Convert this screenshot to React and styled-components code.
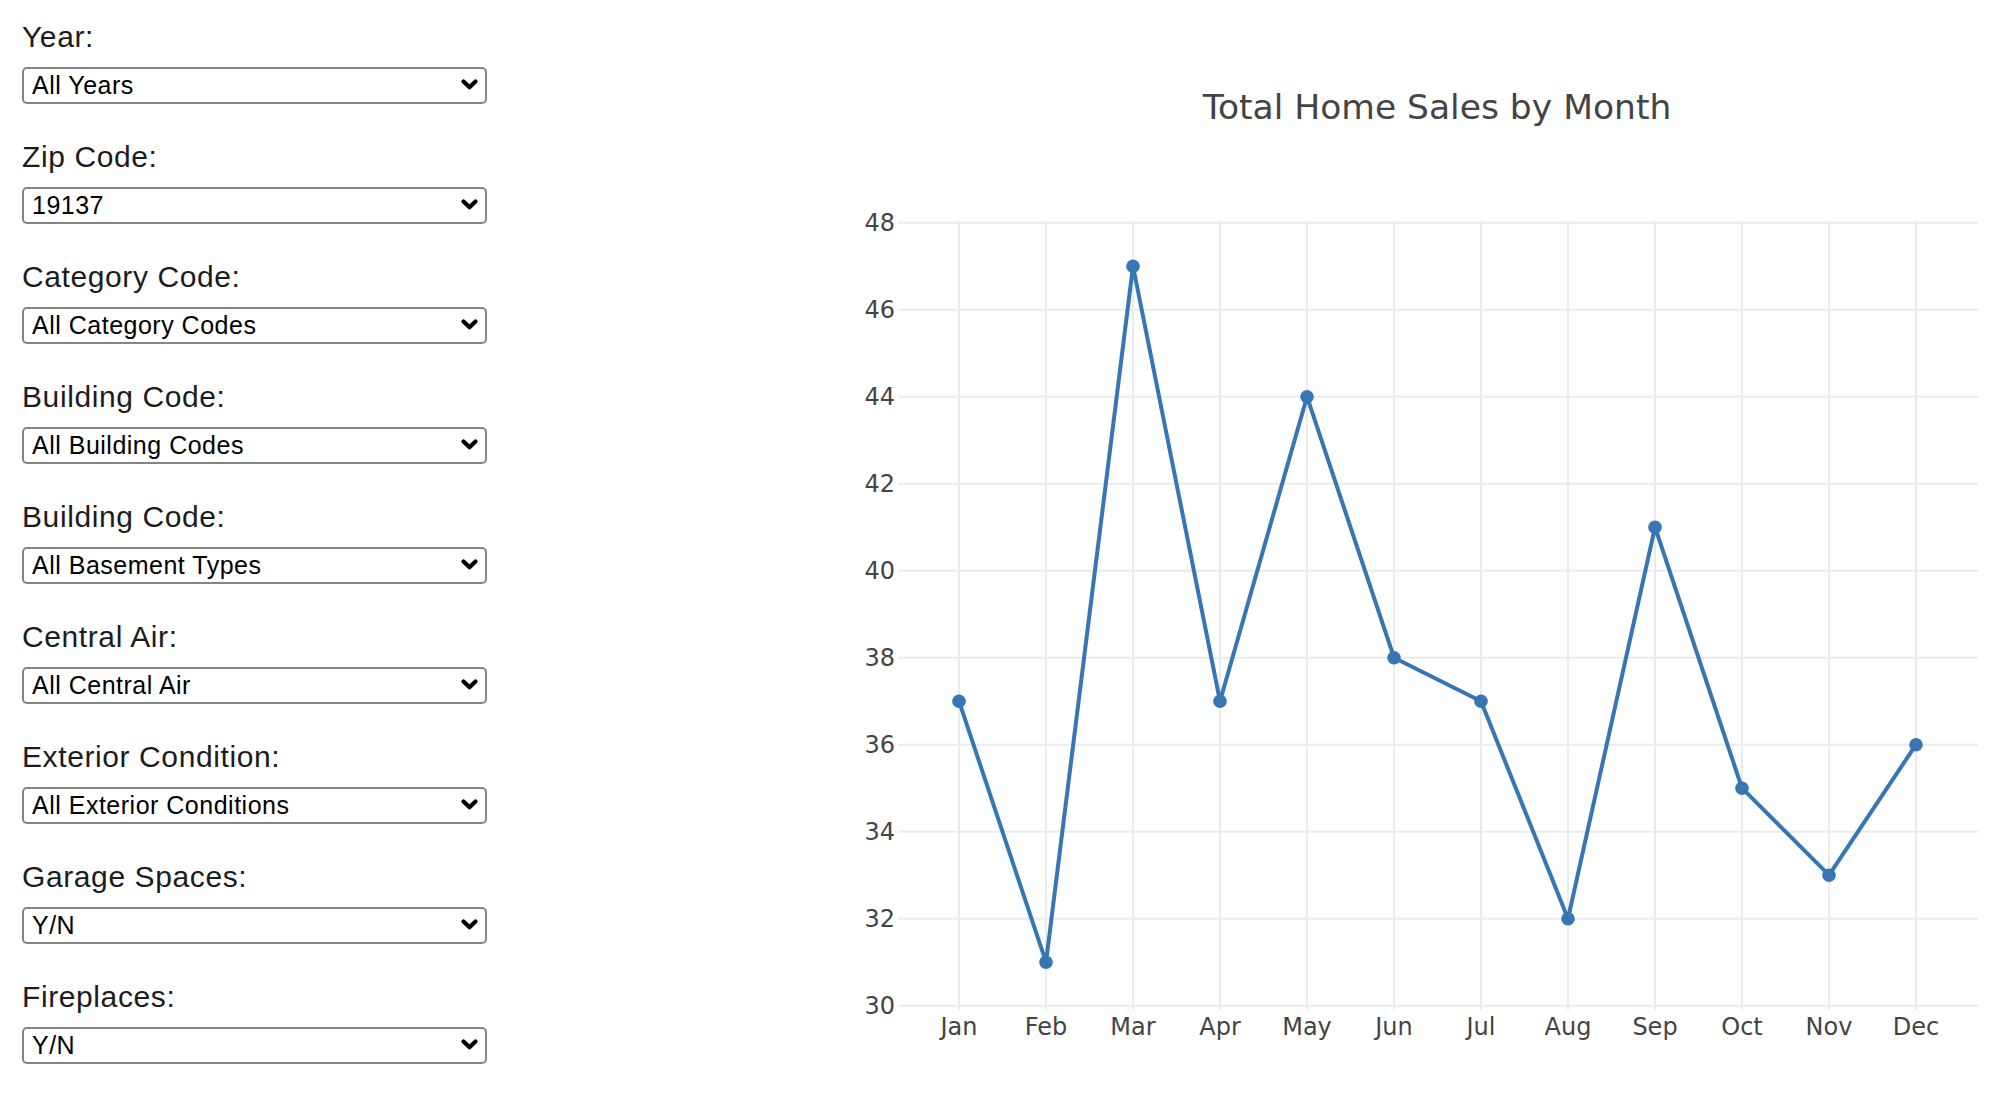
import React from 'react';
import styled, { createGlobalStyle } from 'styled-components';

const GlobalStyle = createGlobalStyle`
  html, body {
    margin: 0;
    padding: 0;
    background: #fff;
  }
  body {
    font-family: "Liberation Sans", Arial, sans-serif;
  }
`;

const Page = styled.div`
  display: flex;
  align-items: flex-start;
  width: 2008px;
  height: 1098px;
  overflow: hidden;
`;

const Sidebar = styled.aside`
  flex: 0 0 487px;
  box-sizing: border-box;
  padding: 20px 0 0 22px;
`;

const FieldGroup = styled.div`
  margin-bottom: 36px;
`;

const FieldLabel = styled.label`
  display: block;
  margin-bottom: 13px;
  font-size: 30px;
  line-height: 34px;
  letter-spacing: 0.6px;
  color: #1c1c1c;
`;

const SelectWrap = styled.div`
  position: relative;
  width: 465px;
`;

const Select = styled.select`
  display: block;
  width: 100%;
  height: 37px;
  box-sizing: border-box;
  margin: 0;
  padding: 0 40px 2px 8px;
  border: 2px solid #858585;
  border-radius: 5px;
  background: #fff;
  color: #000;
  font-family: "Liberation Sans", Arial, sans-serif;
  font-size: 25px;
  letter-spacing: 0.5px;
  appearance: none;
  -webkit-appearance: none;
  outline: none;
`;

const Chevron = styled.svg`
  position: absolute;
  right: 8px;
  top: 11px;
  width: 19px;
  height: 13px;
  pointer-events: none;
`;

const ChartPanel = styled.section`
  flex: 1;
  margin-left: 379px;
`;

const ChartTitle = styled.h2`
  margin: 87px 0 0;
  font-family: "DejaVu Sans", Verdana, sans-serif;
  font-weight: 400;
  font-size: 34.5px;
  line-height: 40px;
  color: #444;
  text-align: center;
`;

const ChartSvg = styled.svg`
  display: block;
  overflow: visible;
`;

const AxisText = styled.text`
  font-family: "DejaVu Sans", Verdana, sans-serif;
  font-size: 24px;
  fill: #444;
`;

const filters = [
  { label: 'Year:', value: 'All Years' },
  { label: 'Zip Code:', value: '19137' },
  { label: 'Category Code:', value: 'All Category Codes' },
  { label: 'Building Code:', value: 'All Building Codes' },
  { label: 'Building Code:', value: 'All Basement Types' },
  { label: 'Central Air:', value: 'All Central Air' },
  { label: 'Exterior Condition:', value: 'All Exterior Conditions' },
  { label: 'Garage Spaces:', value: 'Y/N' },
  { label: 'Fireplaces:', value: 'Y/N' },
];

const months = ['Jan', 'Feb', 'Mar', 'Apr', 'May', 'Jun', 'Jul', 'Aug', 'Sep', 'Oct', 'Nov', 'Dec'];
const sales = [37, 31, 47, 37, 44, 38, 37, 32, 41, 35, 33, 36];
const yTicks = [30, 32, 34, 36, 38, 40, 42, 44, 46, 48];

// plot area, in svg coordinates
const PLOT_LEFT = 32;
const PLOT_RIGHT = 1112;
const PLOT_TOP = 95.7;
const UNIT = 43.5;
const PLOT_BOTTOM = PLOT_TOP + 18 * UNIT;
const FIRST_X = 93;
const STEP_X = 87;

const xAt = (i) => FIRST_X + i * STEP_X;
const yAt = (v) => PLOT_TOP + (48 - v) * UNIT;

const FilterField = ({ label, value, id }) => (
  <FieldGroup>
    <FieldLabel htmlFor={id}>{label}</FieldLabel>
    <SelectWrap>
      <Select id={id} defaultValue={value}>
        <option value={value}>{value}</option>
      </Select>
      <Chevron viewBox="0 0 19 13">
        <polyline
          points="3.5,3.5 9.5,9.2 15.5,3.5"
          fill="none"
          stroke="#000"
          strokeWidth="4.2"
          strokeLinecap="round"
          strokeLinejoin="round"
        />
      </Chevron>
    </SelectWrap>
  </FieldGroup>
);

const SalesChart = () => {
  const points = sales.map((v, i) => `${xAt(i)},${yAt(v)}`).join(' ');

  return (
    <ChartSvg width="1142" height="930">
      {yTicks.map((t) => (
        <line
          key={`h${t}`}
          x1={PLOT_LEFT}
          x2={PLOT_RIGHT}
          y1={yAt(t)}
          y2={yAt(t)}
          stroke="#ebebeb"
          strokeWidth="2"
        />
      ))}
      {months.map((m, i) => (
        <line
          key={`v${m}`}
          x1={xAt(i)}
          x2={xAt(i)}
          y1={PLOT_TOP - 2}
          y2={PLOT_BOTTOM + 4}
          stroke="#ebebeb"
          strokeWidth="2"
        />
      ))}
      {yTicks.map((t) => (
        <AxisText key={`yl${t}`} x="29" y={yAt(t) + 8.6} textAnchor="end">
          {t}
        </AxisText>
      ))}
      {months.map((m, i) => (
        <AxisText key={`xl${m}`} x={xAt(i)} y={PLOT_BOTTOM + 29} textAnchor="middle">
          {m}
        </AxisText>
      ))}
      <polyline
        points={points}
        fill="none"
        stroke="#3776b4"
        strokeWidth="4"
        strokeLinejoin="round"
      />
      {sales.map((v, i) => (
        <circle key={`p${i}`} cx={xAt(i)} cy={yAt(v)} r="6.8" fill="#3776b4" />
      ))}
    </ChartSvg>
  );
};

const App = () => (
  <>
    <GlobalStyle />
    <Page>
      <Sidebar>
        {filters.map((f, i) => (
          <FilterField key={i} id={`filter-${i}`} label={f.label} value={f.value} />
        ))}
      </Sidebar>
      <ChartPanel>
        <ChartTitle>Total Home Sales by Month</ChartTitle>
        <SalesChart />
      </ChartPanel>
    </Page>
  </>
);

export default App;
